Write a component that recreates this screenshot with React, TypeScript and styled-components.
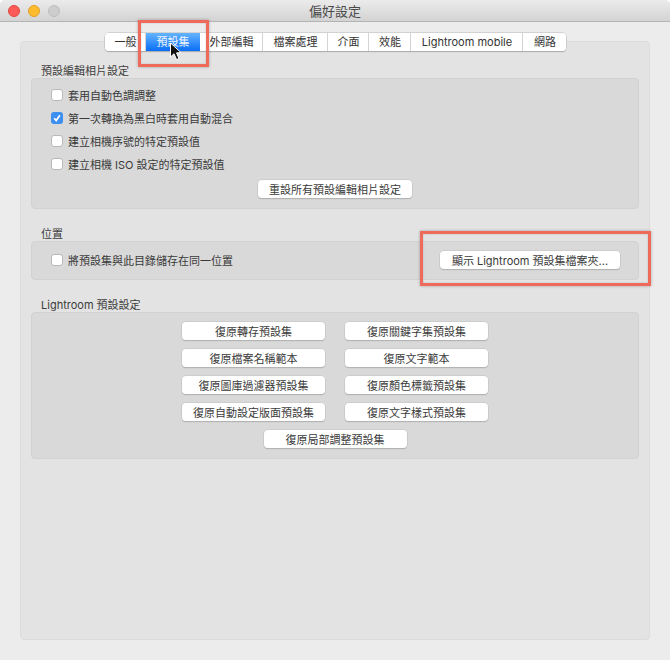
import React from "react";
import styled, { createGlobalStyle } from "styled-components";

const Global = createGlobalStyle`
  html, body { margin: 0; padding: 0; background: #fff; }
  body { font-family: Inter, "Noto Sans CJK TC", sans-serif; font-size: 11px; color: #3a3a3a; }
`;

const Win = styled.div`
  position: relative;
  width: 670px;
  height: 660px;
  background: #ececec;
  border-radius: 5px 5px 0 0;
  overflow: hidden;
  display: flex;
  flex-direction: column;
`;
const TitleBar = styled.div`
  position: relative;
  height: 21px;
  flex: none;
  display: flex;
  align-items: center;
  justify-content: center;
  background: linear-gradient(#ebebeb, #d3d3d3);
  border-bottom: 1px solid #b4b4b4;
  font-size: 13px;
  color: #4a4a4a;
`;
const Lights = styled.div`
  position: absolute;
  left: 8px;
  top: 5px;
  display: flex;
  gap: 8px;
`;
const Light = styled.span<{ $bg: string; $bd: string }>`
  width: 12px;
  height: 12px;
  box-sizing: border-box;
  border-radius: 50%;
  background: ${(p) => p.$bg};
  border: 1px solid ${(p) => p.$bd};
`;
const Content = styled.div`
  flex: 1;
  display: flex;
  flex-direction: column;
  padding: 11px 20px 20px 20px;
  min-height: 0;
`;
const Tabs = styled.div`
  position: relative;
  z-index: 1;
  display: flex;
  align-self: flex-start;
  margin-left: 85px;
  margin-bottom: -10px;
  height: 18px;
  background: #fff;
  border-radius: 4px;
  box-shadow: 0 0 0 0.5px #b8b8b8, 0 1px 1px rgba(0, 0, 0, 0.3);
  overflow: hidden;
`;
const Tab = styled.div<{ $w: number; $active?: boolean }>`
  width: ${(p) => p.$w}px;
  box-sizing: border-box;
  display: flex;
  align-items: center;
  justify-content: center;
  line-height: 18px;
  white-space: nowrap;
  padding-left: ${(p) => (p.$active ? 0 : 1)}px;
  color: ${(p) => (p.$active ? "#f2f7ff" : "#333")};
  background: ${(p) => (p.$active ? "linear-gradient(#64b4fe, #0a6ef6)" : "#fff")};
  border-right: ${(p) => (p.$active ? "none" : "1px solid #d4d4d4")};
  &:last-child { border-right: none; }
`;
const Panel = styled.div`
  flex: 1;
  box-sizing: border-box;
  background: #e3e3e3;
  border: 1px solid #dcdcdc;
  border-radius: 4px;
  padding: 22px 10px 0;
`;
const SectionLabel = styled.div<{ $top?: number }>`
  height: 14px;
  line-height: 14px;
  padding-left: 10px;
  margin-top: ${(p) => p.$top ?? 0}px;
  color: #3d3d3d;
`;
const Group = styled.div`
  box-sizing: border-box;
  background: #d9d9d9;
  border: 1px solid #d2d2d2;
  border-radius: 4px;
`;
const PresetGroup = styled(Group)`
  height: 131px;
  padding: 4px 0 0 19px;
  display: flex;
  flex-direction: column;
`;
const LocationGroup = styled(Group)`
  height: 39px;
  padding: 0 18px 1px 19px;
  display: flex;
  align-items: center;
  justify-content: space-between;
`;
const RestoreGroup = styled(Group)`
  height: 147px;
  padding-top: 9px;
  display: grid;
  grid-template-columns: 143px 143px;
  grid-auto-rows: 18px;
  justify-content: center;
  column-gap: 20px;
  row-gap: 9px;
`;
const Row = styled.label`
  display: flex;
  align-items: center;
  gap: 5px;
  height: 23px;
  color: #3a3a3a;
`;
const Check = styled.span<{ $on?: boolean }>`
  width: 12px;
  height: 12px;
  box-sizing: border-box;
  flex: none;
  display: flex;
  align-items: center;
  justify-content: center;
  border-radius: 3px;
  background: ${(p) => (p.$on ? "#3d8ff2" : "#fff")};
  border: ${(p) => (p.$on ? "none" : "1px solid #b9b9b9")};
`;
const Button = styled.button<{ $w: number }>`
  width: ${(p) => p.$w}px;
  height: 18px;
  padding: 0;
  font: inherit;
  color: #3a3a3a;
  background: #fff;
  border: none;
  border-radius: 4px;
  box-shadow: 0 0 0 0.5px #c2c2c2, 0 1px 1px rgba(0, 0, 0, 0.26);
  white-space: nowrap;
`;
const CenterRow = styled.div`
  display: flex;
  justify-content: center;
  margin-top: 5px;
  padding-right: 19px;
`;
const WideCell = styled.div`
  grid-column: 1 / 3;
  display: flex;
  justify-content: center;
`;
const Callout = styled.div<{ $x: number; $y: number; $w: number; $h: number }>`
  position: absolute;
  z-index: 2;
  left: ${(p) => p.$x}px;
  top: ${(p) => p.$y}px;
  width: ${(p) => p.$w}px;
  height: ${(p) => p.$h}px;
  box-sizing: border-box;
  border: 3px solid #ee6a5b;
  box-shadow: 0 0 3px rgba(0, 0, 0, 0.28), inset 0 0 2px rgba(0, 0, 0, 0.18);
`;
const Cursor = styled.svg`
  position: absolute;
  z-index: 3;
  left: 169px;
  top: 42px;
`;

const tabs: [string, number][] = [
  ["一般", 41],
  ["預設集", 54],
  ["外部編輯", 63],
  ["檔案處理", 65],
  ["介面", 41],
  ["效能", 42],
  ["Lightroom mobile", 112],
  ["網路", 43],
];

const options: [string, boolean][] = [
  ["套用自動色調調整", false],
  ["第一次轉換為黑白時套用自動混合", true],
  ["建立相機序號的特定預設值", false],
  ["建立相機 ISO 設定的特定預設值", false],
];

const restore = [
  "復原轉存預設集",
  "復原關鍵字集預設集",
  "復原檔案名稱範本",
  "復原文字範本",
  "復原圖庫過濾器預設集",
  "復原顏色標籤預設集",
  "復原自動設定版面預設集",
  "復原文字樣式預設集",
];

const Box = ({ on }: { on?: boolean }) => (
  <Check $on={on}>
    {on && (
      <svg width="10" height="10" viewBox="0 0 10 10">
        <path d="M2.2 5.2 L4.2 7.6 L7.9 2.2" fill="none" stroke="#fff" strokeWidth="1.7" />
      </svg>
    )}
  </Check>
);

export default function App() {
  return (
    <>
      <Global />
      <Win>
        <TitleBar>
          <Lights>
            <Light $bg="#fc5b57" $bd="#e2463f" />
            <Light $bg="#febb2e" $bd="#e0a028" />
            <Light $bg="#cdcdcd" $bd="#bcbcbc" />
          </Lights>
          偏好設定
        </TitleBar>
        <Content>
          <Tabs>
            {tabs.map(([t, w], i) => (
              <Tab key={t} $w={w} $active={i === 1}>{t}</Tab>
            ))}
          </Tabs>
          <Panel>
            <SectionLabel>預設編輯相片設定</SectionLabel>
            <PresetGroup>
              {options.map(([t, on]) => (
                <Row key={t}>
                  <Box on={on} />
                  {t}
                </Row>
              ))}
              <CenterRow>
                <Button $w={154}>重設所有預設編輯相片設定</Button>
              </CenterRow>
            </PresetGroup>
            <SectionLabel $top={18}>位置</SectionLabel>
            <LocationGroup>
              <Row>
                <Box />
                將預設集與此目錄儲存在同一位置
              </Row>
              <Button $w={180}>顯示 Lightroom 預設集檔案夾...</Button>
            </LocationGroup>
            <SectionLabel $top={18}>Lightroom 預設設定</SectionLabel>
            <RestoreGroup>
              {restore.map((t) => (
                <Button key={t} $w={143}>{t}</Button>
              ))}
              <WideCell>
                <Button $w={143}>復原局部調整預設集</Button>
              </WideCell>
            </RestoreGroup>
          </Panel>
        </Content>
        <Callout $x={138} $y={20} $w={71} $h={47} />
        <Callout $x={420} $y={231} $w={231} $h={55} />
        <Cursor width="14" height="20" viewBox="0 0 14 20">
          <path d="M1.5 1 L1.5 15 L5 11.8 L7.6 17.6 L10 16.5 L7.5 10.9 L12 10.6 Z" fill="#111" stroke="#fff" strokeWidth="1" />
        </Cursor>
      </Win>
    </>
  );
}
